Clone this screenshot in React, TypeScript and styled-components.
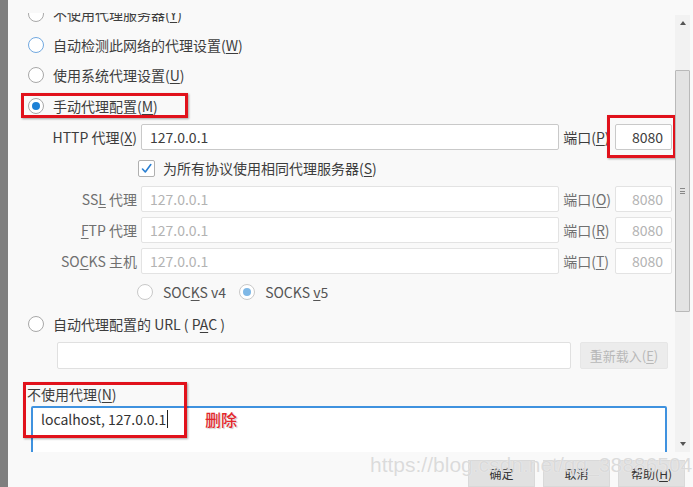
import React from "react";
import styled, { createGlobalStyle } from "styled-components";

const GlobalStyle = createGlobalStyle`
  html, body { margin: 0; padding: 0; background: #f9f9f9; }
  body {
    font-family: "Noto Sans CJK SC", "Noto Sans", sans-serif;
    font-size: 14px;
    color: #3d3d3d;
  }
  * { box-sizing: border-box; }
`;

const Page = styled.div`
  display: flex;
  width: 693px;
  height: 487px;
  overflow: hidden;
`;

const BackWindow = styled.div`
  flex: none;
  width: 8px;
  background: #7f7f7f;
`;

const Dialog = styled.div`
  flex: 1;
  display: flex;
  flex-direction: column;
  background: #f9f9f9;
  padding-top: 13px;
`;

const Body = styled.div`
  flex: none;
  display: flex;
  height: 439px;
`;

const Scroller = styled.div`
  flex: 1;
  overflow: hidden;
`;

const Content = styled.div`
  margin-top: -14.25px;
  display: flex;
  flex-direction: column;
`;

const Key = styled.span`
  text-decoration: underline;
  text-underline-offset: 2px;
  text-decoration-thickness: 1px;
`;

const RadioRow = styled.div<{ $gapTop?: number }>`
  position: relative;
  display: flex;
  align-items: center;
  gap: 9px;
  height: 30.5px;
  margin-top: ${(p) => p.$gapTop ?? 0}px;
  padding-left: 20px;
  line-height: 18px;
  white-space: nowrap;
`;

const Radio = styled.span<{ $checked?: boolean; $focus?: boolean; $light?: boolean }>`
  flex: none;
  width: 16px;
  height: 16px;
  border-radius: 50%;
  background: #fff;
  border: ${(p) => (p.$focus ? "1.5px solid #72a9e0" : p.$light ? "1px solid #c9c9c9" : "1px solid #a8a8a8")};
  display: flex;
  align-items: center;
  justify-content: center;
  &::after {
    content: "";
    width: 8px;
    height: 8px;
    border-radius: 50%;
    background: ${(p) => (p.$checked ? (p.$light ? "#7fb8e6" : "#1d80d5") : "transparent")};
  }
`;

const Highlight = styled.span<{ $l: number; $t: number; $w: number; $h: number }>`
  position: absolute;
  left: ${(p) => p.$l}px;
  top: ${(p) => p.$t}px;
  width: ${(p) => p.$w}px;
  height: ${(p) => p.$h}px;
  border: 3px solid #e1121c;
  box-shadow: 1px 1px 2px rgba(0, 0, 0, 0.35);
  pointer-events: none;
`;

const ProxyGrid = styled.div`
  display: grid;
  grid-template-columns: 129px 1fr auto 57px;
  grid-auto-rows: 26px;
  column-gap: 4px;
  row-gap: 5px;
  margin-top: 3.25px;
  margin-right: 3px;
  line-height: 18px;
`;

const FieldLabel = styled.span<{ $disabled?: boolean }>`
  align-self: center;
  text-align: right;
  white-space: nowrap;
  color: ${(p) => (p.$disabled ? "#707070" : "#3d3d3d")};
`;

const PortLabel = styled(FieldLabel)`
  text-align: left;
`;

const Field = styled.div<{ $disabled?: boolean; $right?: boolean }>`
  position: relative;
  display: flex;
  align-items: center;
  justify-content: ${(p) => (p.$right ? "flex-end" : "flex-start")};
  padding: 0 8px;
  background: #fff;
  border: 1px solid ${(p) => (p.$disabled ? "#e3e3e3" : "#c9c9c9")};
  border-radius: 2px;
  color: ${(p) => (p.$disabled ? "#b3b3b3" : "#3d3d3d")};
`;

const CheckRow = styled.label`
  grid-column: 2 / -1;
  display: flex;
  align-items: center;
  gap: 8px;
  margin-left: -3px;
  white-space: nowrap;
`;

const CheckBox = styled.span`
  flex: none;
  width: 17px;
  height: 17px;
  background: #fff;
  border: 1px solid #b0b0b0;
  border-radius: 2px;
  display: flex;
  align-items: center;
  justify-content: center;
`;

const SocksVersions = styled.div`
  display: flex;
  align-items: center;
  gap: 13px;
  height: 20px;
  margin-top: 8px;
  margin-left: 129px;
  line-height: 18px;
`;

const SocksOption = styled.span`
  display: flex;
  align-items: center;
  gap: 10px;
  color: #555;
`;

const PacRow = styled.div`
  display: flex;
  gap: 9px;
  height: 27px;
  margin: 3.5px 7px 0 49px;
`;

const PacInput = styled.div`
  flex: 1;
  background: #fff;
  border: 1px solid #e0e0e0;
  border-radius: 2px;
`;

const ReloadButton = styled.div`
  flex: none;
  width: 88px;
  display: flex;
  align-items: center;
  justify-content: center;
  background: #ececec;
  border: 1px solid #e6e6e6;
  border-radius: 2px;
  color: #b8b8b8;
  font-size: 13px;
`;

const NoProxySection = styled.div`
  position: relative;
  margin-top: 16px;
  display: flex;
  flex-direction: column;
`;

const NoProxyLabel = styled.span`
  margin-left: 19px;
  line-height: 18px;
`;

const TextArea = styled.div`
  position: relative;
  height: 80px;
  margin: 3px 8px 0 23px;
  padding: 2px 8px;
  background: #fff;
  border: 2px solid #3f92df;
  border-radius: 2px;
  line-height: 18px;
  font-size: 14px;
  color: #333;
`;

const Caret = styled.span`
  display: inline-block;
  width: 1px;
  height: 18px;
  background: #222;
  vertical-align: top;
  margin-left: 1px;
`;

const Note = styled.span`
  position: absolute;
  left: 172px;
  top: 2px;
  font-size: 16px;
  line-height: 18px;
  font-weight: 500;
  color: #e3262b;
  text-shadow: 0 0 2px #fff, 1px 1px 1px rgba(0, 0, 0, 0.25);
`;

const ScrollBar = styled.div`
  flex: none;
  width: 15px;
  margin: 2px 3px 0 0;
  display: flex;
  flex-direction: column;
  background: #f2f2f2;
`;

const Arrow = styled.div<{ $down?: boolean }>`
  flex: none;
  height: 16px;
  display: flex;
  align-items: center;
  justify-content: center;
  &::after {
    content: "";
    border-left: 3px solid transparent;
    border-right: 3px solid transparent;
    ${(p) => (p.$down ? "border-top: 4px solid #555;" : "border-bottom: 4px solid #555;")}
  }
`;

const Track = styled.div`
  flex: 1;
  padding-top: 39px;
`;

const Thumb = styled.div`
  height: 242px;
  background: #e3e3e3;
  border: 1px solid #b9b9b9;
  border-radius: 1px;
  display: flex;
  align-items: center;
  justify-content: center;
`;

const Grip = styled.span`
  width: 5px;
  height: 6px;
  border-top: 1px solid #888;
  border-bottom: 1px solid #888;
  position: relative;
  &::after {
    content: "";
    position: absolute;
    left: 0;
    right: 0;
    top: 2px;
    border-top: 1px solid #888;
  }
`;

const Footer = styled.div`
  position: relative;
  flex: 1;
  display: flex;
  justify-content: flex-end;
  align-items: flex-start;
  gap: 8px;
  padding: 8px 8px 0 0;
`;

const Button = styled.div`
  width: 67px;
  height: 27px;
  display: flex;
  align-items: center;
  justify-content: center;
  background: #e1e1e1;
  border: 1px solid #d9d9d9;
  font-size: 12px;
  color: #333;
`;

const Watermark = styled.span`
  position: absolute;
  left: 362px;
  top: 1px;
  font-family: "Liberation Sans", Arial, sans-serif;
  font-size: 21px;
  line-height: 24px;
  color: rgba(210, 210, 210, 0.8);
  text-shadow: 0 0 1px rgba(255, 255, 255, 0.9);
  white-space: nowrap;
  pointer-events: none;
`;

type Row = {
  label: React.ReactNode;
  port: React.ReactNode;
  disabled: boolean;
};

const sharedRows: Row[] = [
  { label: <>SS<Key>L</Key> 代理</>, port: <>端口(<Key>O</Key>)</>, disabled: true },
  { label: <><Key>F</Key>TP 代理</>, port: <>端口(<Key>R</Key>)</>, disabled: true },
  { label: <>SO<Key>C</Key>KS 主机</>, port: <>端口(<Key>T</Key>)</>, disabled: true },
];

export default function App() {
  return (
    <>
      <GlobalStyle />
      <Page>
        <BackWindow />
        <Dialog>
          <Body>
            <Scroller>
              <Content>
                <RadioRow>
                  <Radio />
                  <span>不使用代理服务器(<Key>Y</Key>)</span>
                </RadioRow>
                <RadioRow>
                  <Radio $focus />
                  <span>自动检测此网络的代理设置(<Key>W</Key>)</span>
                </RadioRow>
                <RadioRow>
                  <Radio />
                  <span>使用系统代理设置(<Key>U</Key>)</span>
                </RadioRow>
                <RadioRow>
                  <Radio $checked />
                  <span>手动代理配置(<Key>M</Key>)</span>
                  <Highlight $l={13} $t={3} $w={167} $h={25} />
                </RadioRow>

                <ProxyGrid>
                  <FieldLabel>HTTP 代理(<Key>X</Key>)</FieldLabel>
                  <Field>127.0.0.1</Field>
                  <PortLabel>端口(<Key>P</Key>)</PortLabel>
                  <Field $right>
                    8080
                    <Highlight $l={-9} $t={-10} $w={69} $h={43} />
                  </Field>

                  <CheckRow>
                    <CheckBox>
                      <svg width="13" height="13" viewBox="0 0 13 13">
                        <path d="M2.5 7 L5.3 10 L10.8 2.6" fill="none" stroke="#2a7fd2" strokeWidth="1.6" strokeLinecap="round" strokeLinejoin="round" />
                      </svg>
                    </CheckBox>
                    <span>为所有协议使用相同代理服务器(<Key>S</Key>)</span>
                  </CheckRow>

                  {sharedRows.map((r, i) => (
                    <React.Fragment key={i}>
                      <FieldLabel $disabled={r.disabled}>{r.label}</FieldLabel>
                      <Field $disabled={r.disabled}>127.0.0.1</Field>
                      <PortLabel $disabled={r.disabled}>{r.port}</PortLabel>
                      <Field $disabled={r.disabled} $right>8080</Field>
                    </React.Fragment>
                  ))}
                </ProxyGrid>

                <SocksVersions>
                  <SocksOption>
                    <Radio $light />
                    <span>SOC<Key>K</Key>S v4</span>
                  </SocksOption>
                  <SocksOption>
                    <Radio $light $checked />
                    <span>SOCKS <Key>v</Key>5</span>
                  </SocksOption>
                </SocksVersions>

                <RadioRow $gapTop={6.25}>
                  <Radio />
                  <span>自动代理配置的 URL ( P<Key>A</Key>C )</span>
                </RadioRow>

                <PacRow>
                  <PacInput />
                  <ReloadButton>
                    <span>重新载入(<Key>E</Key>)</span>
                  </ReloadButton>
                </PacRow>

                <NoProxySection>
                  <NoProxyLabel>不使用代理(<Key>N</Key>)</NoProxyLabel>
                  <TextArea>
                    localhost, 127.0.0.1
                    <Caret />
                    <Note>删除</Note>
                  </TextArea>
                  <Highlight $l={15} $t={-3} $w={164} $h={56} />
                </NoProxySection>
              </Content>
            </Scroller>
            <ScrollBar>
              <Arrow />
              <Track>
                <Thumb>
                  <Grip />
                </Thumb>
              </Track>
              <Arrow $down />
            </ScrollBar>
          </Body>
          <Footer>
            <Button>确定</Button>
            <Button>取消</Button>
            <Button>帮助(<Key>H</Key>)</Button>
            <Watermark>https://blog.csdn.net/qq_38886504</Watermark>
          </Footer>
        </Dialog>
      </Page>
    </>
  );
}
